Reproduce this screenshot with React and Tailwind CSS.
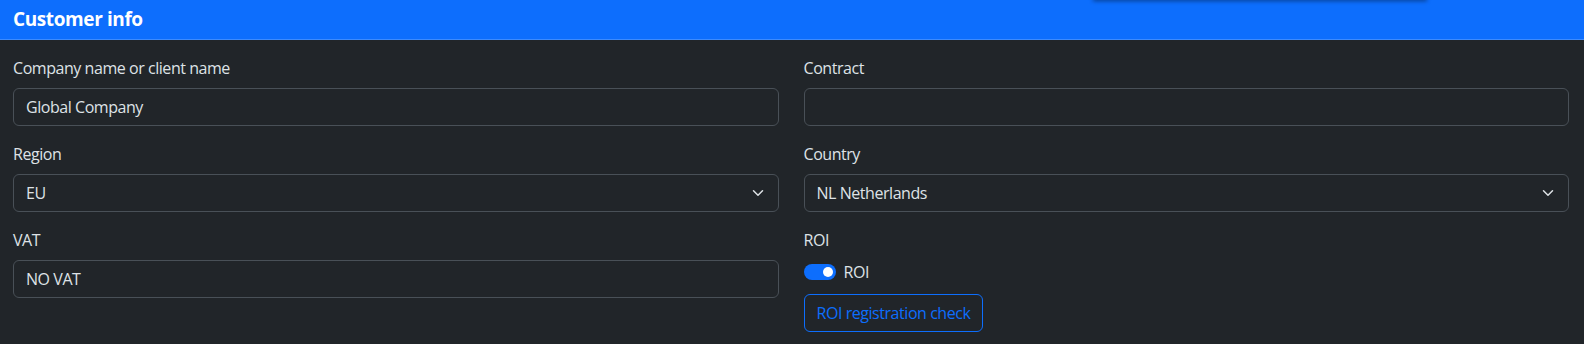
import React from "react";

const font = { fontFamily: '"Segoe UI", "Open Sans", "Noto Sans", sans-serif' };

function Label({ children }) {
  return <div className="h-6 leading-6 text-[16px] tracking-[-0.45px] text-[#dee2e6] mb-2">{children}</div>;
}

function Input({ value }) {
  return (
    <div className="h-[38px] rounded-[6px] border border-[#495057] bg-[#212529] px-3 flex items-center text-[16px] tracking-[-0.45px] text-[#dee2e6]">
      {value}
    </div>
  );
}

function Select({ value }) {
  return (
    <div className="h-[38px] rounded-[6px] border border-[#495057] bg-[#212529] pl-3 pr-[12px] flex items-center justify-between text-[16px] tracking-[-0.45px] text-[#dee2e6]">
      <span>{value}</span>
      <svg width="16" height="12" viewBox="0 0 16 16" fill="none" stroke="#dee2e6" strokeWidth="2" strokeLinecap="round" strokeLinejoin="round">
        <path d="m2 5 6 6 6-6" />
      </svg>
    </div>
  );
}

export default function App() {
  return (
    <div className="w-[1584px] h-[344px] bg-[#212529] relative overflow-hidden" style={font}>
      <div className="h-10 bg-[#0d6efd] border-b border-[#3d8bfd] px-[13px] flex items-center">
        <span className="text-[19px] font-bold tracking-[-0.4px] text-white leading-none">Customer info</span>
      </div>
      <div className="absolute top-0 left-[1093px] w-[334px] h-[4px] -translate-y-[4px] shadow-[0_1px_4px_rgba(0,0,0,0.45)] bg-[#0d6efd]" />
      <div className="grid grid-cols-2 gap-x-[25px] gap-y-4 pl-[13px] pr-[15px] pt-4">
        <div>
          <Label>Company name or client name</Label>
          <Input value="Global Company" />
        </div>
        <div>
          <Label>Contract</Label>
          <Input value="" />
        </div>
        <div>
          <Label>Region</Label>
          <Select value="EU" />
        </div>
        <div>
          <Label>Country</Label>
          <Select value="NL Netherlands" />
        </div>
        <div>
          <Label>VAT</Label>
          <Input value="NO VAT" />
        </div>
        <div>
          <Label>ROI</Label>
          <div className="h-6 flex items-center gap-2">
            <div className="w-8 h-4 rounded-full bg-[#0d6efd] flex items-center justify-end pr-[3px]">
              <div className="w-[10px] h-[10px] rounded-full bg-white" />
            </div>
            <span className="text-[16px] tracking-[-0.45px] text-[#dee2e6]">ROI</span>
          </div>
          <button className="mt-[10px] h-[38px] px-3 rounded-[6px] border border-[#0d6efd] text-[#0d6efd] text-[16px] tracking-[-0.45px] bg-transparent">
            ROI registration check
          </button>
        </div>
      </div>
    </div>
  );
}
